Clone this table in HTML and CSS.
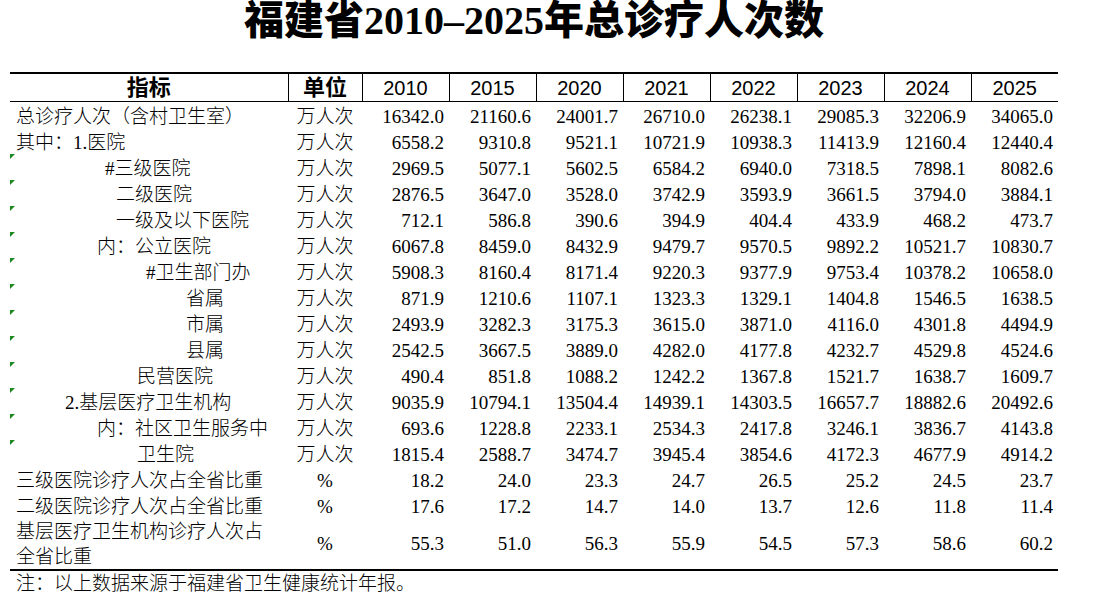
FILE: index.html
```html
<!DOCTYPE html>
<html lang="zh-CN">
<head>
<meta charset="utf-8">
<title>福建省2010–2025年总诊疗人次数</title>
<link rel="stylesheet" href="styles.css">
</head>
<body>
<div class="sheet">
  <h1 class="title">福建省2010–2025年总诊疗人次数</h1>
  <table class="grid">
    <colgroup>
      <col class="c-name"><col class="c-unit">
      <col class="c-yr"><col class="c-yr"><col class="c-yr"><col class="c-yr">
      <col class="c-yr"><col class="c-yr"><col class="c-yr"><col class="c-yr">
    </colgroup>
    <thead>
      <tr>
        <th class="hz">指标</th><th class="hz">单位</th>
        <th>2010</th><th>2015</th><th>2020</th><th>2021</th><th>2022</th><th>2023</th><th>2024</th><th class="last">2025</th>
      </tr>
    </thead>
    <tbody>
      <tr><td class="name i0">总诊疗人次（含村卫生室）</td><td class="unit">万人次</td><td>16342.0</td><td>21160.6</td><td>24001.7</td><td>26710.0</td><td>26238.1</td><td>29085.3</td><td>32206.9</td><td>34065.0</td></tr>
      <tr><td class="name i0">其中：1.医院</td><td class="unit">万人次</td><td>6558.2</td><td>9310.8</td><td>9521.1</td><td>10721.9</td><td>10938.3</td><td>11413.9</td><td>12160.4</td><td>12440.4</td></tr>
      <tr><td class="name flag i-hash3">#三级医院</td><td class="unit">万人次</td><td>2969.5</td><td>5077.1</td><td>5602.5</td><td>6584.2</td><td>6940.0</td><td>7318.5</td><td>7898.1</td><td>8082.6</td></tr>
      <tr><td class="name flag i-lvl">二级医院</td><td class="unit">万人次</td><td>2876.5</td><td>3647.0</td><td>3528.0</td><td>3742.9</td><td>3593.9</td><td>3661.5</td><td>3794.0</td><td>3884.1</td></tr>
      <tr><td class="name flag i-lvl">一级及以下医院</td><td class="unit">万人次</td><td>712.1</td><td>586.8</td><td>390.6</td><td>394.9</td><td>404.4</td><td>433.9</td><td>468.2</td><td>473.7</td></tr>
      <tr><td class="name flag i-nei">内：公立医院</td><td class="unit">万人次</td><td>6067.8</td><td>8459.0</td><td>8432.9</td><td>9479.7</td><td>9570.5</td><td>9892.2</td><td>10521.7</td><td>10830.7</td></tr>
      <tr><td class="name flag i-dept">#卫生部门办</td><td class="unit">万人次</td><td>5908.3</td><td>8160.4</td><td>8171.4</td><td>9220.3</td><td>9377.9</td><td>9753.4</td><td>10378.2</td><td>10658.0</td></tr>
      <tr><td class="name flag i-sub">省属</td><td class="unit">万人次</td><td>871.9</td><td>1210.6</td><td>1107.1</td><td>1323.3</td><td>1329.1</td><td>1404.8</td><td>1546.5</td><td>1638.5</td></tr>
      <tr><td class="name flag i-sub">市属</td><td class="unit">万人次</td><td>2493.9</td><td>3282.3</td><td>3175.3</td><td>3615.0</td><td>3871.0</td><td>4116.0</td><td>4301.8</td><td>4494.9</td></tr>
      <tr><td class="name flag i-sub">县属</td><td class="unit">万人次</td><td>2542.5</td><td>3667.5</td><td>3889.0</td><td>4282.0</td><td>4177.8</td><td>4232.7</td><td>4529.8</td><td>4524.6</td></tr>
      <tr><td class="name flag i-priv">民营医院</td><td class="unit">万人次</td><td>490.4</td><td>851.8</td><td>1088.2</td><td>1242.2</td><td>1367.8</td><td>1521.7</td><td>1638.7</td><td>1609.7</td></tr>
      <tr><td class="name flag i-base">2.基层医疗卫生机构</td><td class="unit">万人次</td><td>9035.9</td><td>10794.1</td><td>13504.4</td><td>14939.1</td><td>14303.5</td><td>16657.7</td><td>18882.6</td><td>20492.6</td></tr>
      <tr><td class="name flag i-nei">内：社区卫生服务中</td><td class="unit">万人次</td><td>693.6</td><td>1228.8</td><td>2233.1</td><td>2534.3</td><td>2417.8</td><td>3246.1</td><td>3836.7</td><td>4143.8</td></tr>
      <tr><td class="name flag i-priv">卫生院</td><td class="unit">万人次</td><td>1815.4</td><td>2588.7</td><td>3474.7</td><td>3945.4</td><td>3854.6</td><td>4172.3</td><td>4677.9</td><td>4914.2</td></tr>
      <tr><td class="name i0">三级医院诊疗人次占全省比重</td><td class="unit">%</td><td>18.2</td><td>24.0</td><td>23.3</td><td>24.7</td><td>26.5</td><td>25.2</td><td>24.5</td><td>23.7</td></tr>
      <tr><td class="name i0">二级医院诊疗人次占全省比重</td><td class="unit">%</td><td>17.6</td><td>17.2</td><td>14.7</td><td>14.0</td><td>13.7</td><td>12.6</td><td>11.8</td><td>11.4</td></tr>
      <tr class="tall"><td class="name i0 wrap">基层医疗卫生机构诊疗人次占全省比重</td><td class="unit">%</td><td>55.3</td><td>51.0</td><td>56.3</td><td>55.9</td><td>54.5</td><td>57.3</td><td>58.6</td><td>60.2</td></tr>
    </tbody>
  </table>
  <p class="note">注：以上数据来源于福建省卫生健康统计年报。</p>
</div>
</body>
</html>
```

FILE: styles.css
```css
html, body {
  margin: 0;
  padding: 0;
  background: #ffffff;
}

.sheet {
  margin-left: 10px;
  width: 1048px;
  color: #000;
  font-family: "Liberation Serif", "Noto Sans CJK SC", serif;
  text-spacing-trim: space-all;
}

.title {
  margin: 0;
  height: 72px;
  line-height: 42px;
  text-align: center;
  font-size: 40px;
  font-weight: 900;
  font-family: "Liberation Serif", "Noto Sans CJK SC", serif;
}

.grid {
  width: 1048px;
  table-layout: fixed;
  border-collapse: collapse;
  border-top: 2px solid #000;
  border-bottom: 2px solid #000;
}

.c-name { width: 278px; }
.c-unit { width: 74px; }
.c-yr { width: 87px; }

.grid thead tr {
  height: 28px;
}

.grid th {
  padding: 1px 0 0 0;
  border-bottom: 1px solid #000;
  border-right: 1px solid #000;
  text-align: center;
  vertical-align: middle;
  font-family: "Liberation Sans", "Noto Sans CJK SC", sans-serif;
  font-size: 20px;
  font-weight: 400;
  line-height: 24px;
}

.grid th.hz {
  font-size: 22px;
  font-weight: 700;
}

.grid th.last {
  border-right: none;
}

.grid tbody tr {
  height: 26px;
}

.grid tbody tr.tall {
  height: 52px;
}

.grid td {
  padding: 3px 5px 0 0;
  text-align: right;
  vertical-align: middle;
  font-size: 19px;
  line-height: 23px;
  white-space: nowrap;
}

.grid tr.tall td {
  padding-top: 1px;
}

.grid td.name {
  position: relative;
  text-align: left;
  padding-right: 0;
  font-weight: 300;
}

.grid td.unit {
  text-align: center;
  padding-left: 0;
  padding-right: 0;
  font-weight: 300;
}

.grid td.flag::before {
  content: "";
  position: absolute;
  top: 0;
  left: 0;
  width: 0;
  height: 0;
  border-top: 5px solid #1c8a1c;
  border-right: 5px solid transparent;
}

.grid td.i0 { padding-left: 6px; }
.grid td.i-hash3 { padding-left: 95px; }
.grid td.i-lvl { padding-left: 106px; }
.grid td.i-nei { padding-left: 87px; }
.grid td.i-dept { padding-left: 136px; }
.grid td.i-sub { padding-left: 176px; }
.grid td.i-priv { padding-left: 127px; }
.grid td.i-base { padding-left: 55px; }

.grid td.wrap {
  white-space: normal;
  padding-right: 16px;
  line-height: 25px;
}

.note {
  margin: 0;
  padding-left: 6px;
  font-size: 19px;
  line-height: 22px;
  font-weight: 300;
  font-family: "Noto Sans CJK SC", sans-serif;
}
```
